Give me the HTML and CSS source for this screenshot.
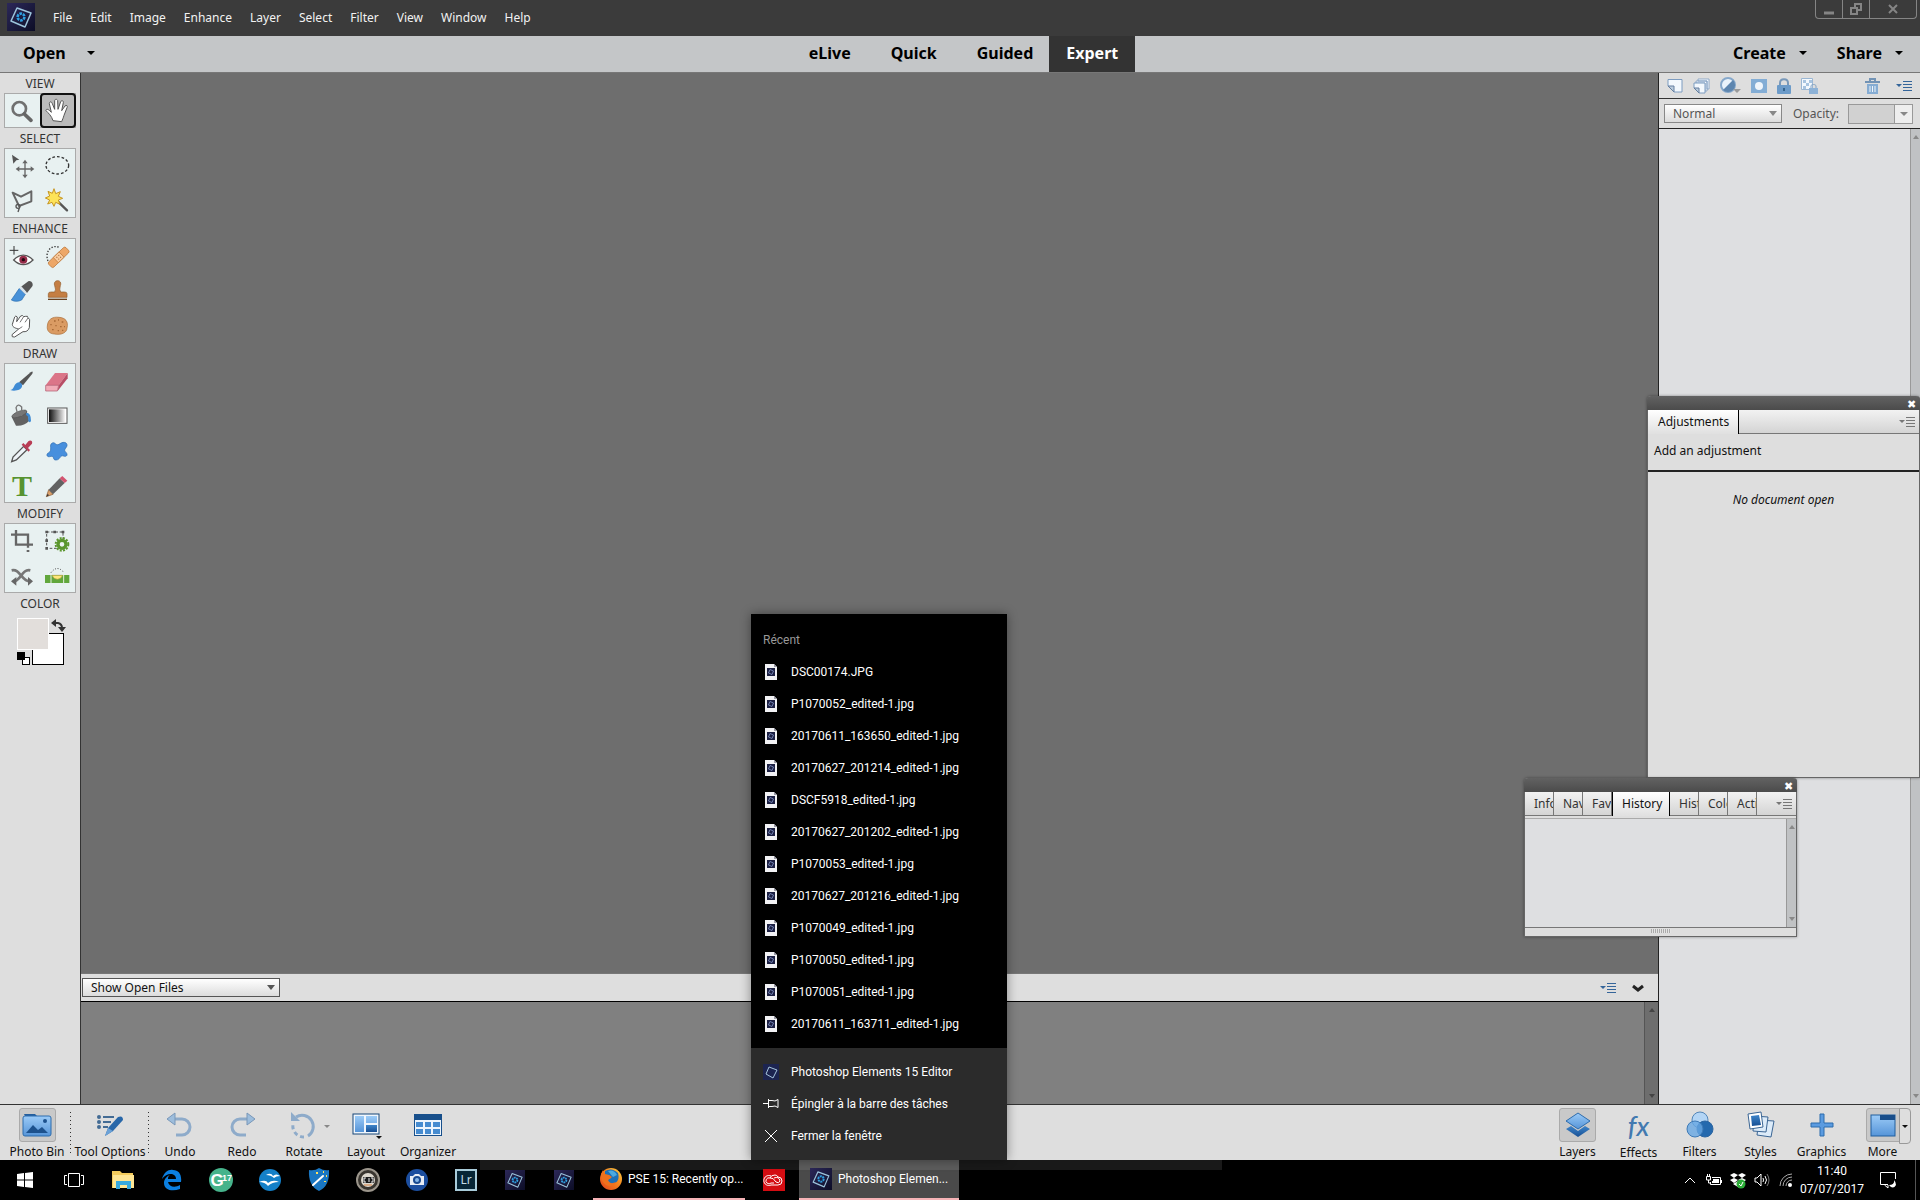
FILE: index.html
```html
<!DOCTYPE html>
<html lang="en">
  <head>
    <meta charset="UTF-8" />
    <meta name="viewport" content="width=device-width, initial-scale=1.0" />
    <title>Photoshop Elements 15 Editor</title>
    <link rel="stylesheet" href="styles.css">
  </head>
  <body>
    <!-- Shared icons -->
    <svg class="sprite" aria-hidden="true">
      <defs>
        <linearGradient id="blue" x1="0" y1="0" x2="0" y2="1"><stop offset="0" stop-color="#9ccbf7" /><stop offset="1" stop-color="#5594d8" /></linearGradient>
        <linearGradient id="deep" x1="0" y1="0" x2="0" y2="1"><stop offset="0" stop-color="#3e85ca" /><stop offset="1" stop-color="#174f94" /></linearGradient>
        <linearGradient id="bw"><stop offset="0" stop-color="#111" /><stop offset="1" stop-color="#fff" /></linearGradient>
        <linearGradient id="fox" x1="0" y1="1" x2="1" y2="0"><stop offset="0" stop-color="#e2401b" /><stop offset="0.6" stop-color="#f58a1f" /><stop offset="1" stop-color="#ffd84a" /></linearGradient>
        <linearGradient id="night" x1="0" y1="0" x2="1" y2="1"><stop offset="0" stop-color="#2c2859" /><stop offset="1" stop-color="#0c0d26" /></linearGradient>
      </defs>
      <symbol id="pse" viewBox="0 0 28 28">
        <rect width="28" height="28" fill="url(#night)" />
        <path d="M10 5 24 10 18 24 4 18Z" fill="none" stroke="#9cc4dc" stroke-width="1.5" stroke-linejoin="round" />
        <circle cx="14" cy="14" r="3.4" fill="none" stroke="#2d9fe0" stroke-width="2.6" stroke-dasharray="2.6 0.9" />
      </symbol>
      <symbol id="doc" viewBox="0 0 12 16">
        <path d="M0 0H9L12 3V16H0Z" fill="#f2f2f5" />
        <path d="M9 0V3H12Z" fill="#9a9aa6" />
        <rect x="2" y="4" width="8" height="8" fill="#1b1f42" />
        <path d="M5 5.500 8.500 7 7 10.500 3.500 9Z" fill="none" stroke="#8394c6" stroke-width="0.8" />
      </symbol>
      <symbol id="menu" viewBox="0 0 16 12">
        <path d="M0 4H6L3 7Z" />
        <path d="M7 1.500H16M7 4.500H16M7 7.500H16M7 10.500H16" stroke="currentColor" stroke-width="1" />
      </symbol>
    </svg>

    <!-- Menu bar -->
    <header class="menubar">
      <svg class="logo" width="28" height="28"><use href="#pse" /></svg>
      <nav class="menus">
        <button>File</button>
        <button>Edit</button>
        <button>Image</button>
        <button>Enhance</button>
        <button>Layer</button>
        <button>Select</button>
        <button>Filter</button>
        <button>View</button>
        <button>Window</button>
        <button>Help</button>
      </nav>
      <div class="window-buttons">
        <button aria-label="Minimize"><svg width="12" height="12" viewBox="0 0 12 12"><path d="M1 10H11" stroke-width="3" /></svg></button>
        <button aria-label="Restore"><svg width="12" height="12" viewBox="0 0 12 12"><path d="M5 4V1H11V7H8M1 5H7V11H1Z" stroke-width="2" /></svg></button>
        <button class="wide" aria-label="Close"><svg width="12" height="12" viewBox="0 0 12 12"><path d="M2 2 10 10M10 2 2 10" stroke-width="2" /></svg></button>
      </div>
    </header>

    <!-- Mode bar -->
    <div class="modebar">
      <button class="mode-open">Open <i class="caret"></i></button>
      <nav class="modes">
        <button>eLive</button>
        <button>Quick</button>
        <button>Guided</button>
        <button class="active">Expert</button>
      </nav>
      <div class="mode-right">
        <button>Create <i class="caret"></i></button>
        <button>Share <i class="caret"></i></button>
      </div>
    </div>

    <main class="main">
      <!-- Tools -->
      <aside class="tools">
        <h2>VIEW</h2>
        <div class="tool-group">
          <button aria-label="Zoom"><svg viewBox="0 0 78 78"><circle cx="31" cy="32" r="20" fill="#e9f3f5" stroke="#707070" stroke-width="8" /><path d="M46 48 66 67" stroke="#666" stroke-width="11" stroke-linecap="round" /></svg></button>
          <button class="selected" aria-label="Hand"><svg viewBox="0 0 78 78"><path d="M24 68C20 54 10 45 3 38 3 31 10 33 19 43L13 17C13 10 20 10 22 17L29 34 29 8C30 2 37 3 38 8L39 34 47 11C50 6 56 8 55 14L50 38 60 24C64 20 69 23 66 29L57 52C55 60 52 65 50 71Z" fill="#fff" stroke="#555" stroke-width="3" stroke-linejoin="round" /></svg></button>
        </div>
        <h2>SELECT</h2>
        <div class="tool-group">
          <button aria-label="Move"><svg viewBox="0 0 78 78"><path d="M9 5 31 20 22 22 13 32Z" fill="#555" /><path d="M48 26V70M26 48H70" stroke="#666" stroke-width="4" /><path d="M48 20 56 31H40ZM48 76 56 65H40ZM20 48 31 40V56ZM76 48 65 40V56Z" fill="#666" /></svg></button>
          <button aria-label="Elliptical marquee"><svg viewBox="0 0 78 78"><ellipse cx="37" cy="37" rx="34" ry="26" fill="none" stroke="#333" stroke-width="4" stroke-dasharray="8 6" /></svg></button>
          <button aria-label="Lasso"><svg viewBox="0 0 78 78"><path d="M11 14 36 26 67 10V40L30 54Z" fill="none" stroke="#666" stroke-width="6" stroke-linejoin="round" /><circle cx="27" cy="55" r="6" fill="none" stroke="#555" stroke-width="4" /><path d="M31 60 27 72" stroke="#555" stroke-width="4" /></svg></button>
          <button aria-label="Quick selection"><svg viewBox="0 0 78 78"><path d="M36 38 66 67" stroke="#555" stroke-width="7" stroke-linecap="round" /><path d="M27 2 32 17 46 11 40 25 53 31 40 36 45 49 32 43 27 55 21 43 8 48 14 36 1 30 14 24 9 10 22 16Z" fill="#fde358" stroke="#c79622" stroke-width="3" /></svg></button>
        </div>
        <h2>ENHANCE</h2>
        <div class="tool-group">
          <button aria-label="Red eye removal"><svg viewBox="0 0 78 78"><path d="M15 9V35M2 22H28" stroke="#333" stroke-width="3" /><path d="M14 51Q43 22 72 51Q43 79 14 51Z" fill="#fff" stroke="#555" stroke-width="4" /><circle cx="43" cy="50" r="12" fill="#942b48" /><circle cx="43" cy="50" r="5" fill="#220a12" /></svg></button>
          <button aria-label="Spot healing"><svg viewBox="0 0 78 78"><path d="M9 54C-2 25 20 2 45 14" fill="none" stroke="#333" stroke-width="4" stroke-dasharray="4 5" /><g transform="rotate(-44 41 43)"><rect x="5" y="32" width="72" height="22" rx="6" fill="#eda768" stroke="#b97436" stroke-width="2" /><rect x="29" y="32" width="24" height="22" fill="#f8cb9f" stroke="#b97436" stroke-width="2" /><path d="M36 39h3M44 39h3M36 47h3M44 47h3" stroke="#98602c" stroke-width="3" /></g></svg></button>
          <button aria-label="Smart brush"><svg viewBox="0 0 78 78"><path d="M35 27 54 45 70 25C74 17 66 6 58 10Z" fill="#555" /><path d="M31 31 49 49 38 66C26 72 14 70 7 66Z" fill="#4791d8" stroke="#286caf" stroke-width="2" /><path d="M31 31 49 49 53 43 37 25Z" fill="#d8e2e9" /></svg></button>
          <button aria-label="Clone stamp"><svg viewBox="0 0 78 78"><path d="M9 64H66" stroke="#68401e" stroke-width="4" /><path d="M10 58V47Q10 42 18 42H29Q34 35 29 23C22 3 54 3 46 23Q42 35 47 42H58Q66 42 66 47V58Z" fill="#c47e43" stroke="#925a28" stroke-width="2" /></svg></button>
          <button aria-label="Smudge"><svg viewBox="0 0 78 78"><path d="M9 65 29 48C22 46 10 44 10 34L17 12Q20 6 25 12L23 26 35 9Q41 5 44 11L50 10Q57 8 57 14L62 20 61 44Q56 58 42 56L17 72Q7 74 9 65Z" fill="#fff" stroke="#555" stroke-width="3" stroke-linejoin="round" /><path d="M44 11 33 28M57 15 48 28M29 48 40 41" fill="none" stroke="#777" stroke-width="3" /></svg></button>
          <button aria-label="Sponge"><svg viewBox="0 0 78 78"><path d="M7 39C8 20 22 10 42 13 61 14 71 26 66 45 66 59 49 67 28 63 13 62 5 53 7 39Z" fill="#da9b63" stroke="#a96c38" stroke-width="2" /><path d="M16 35h4M27 24h5M39 21h3M50 27h5M31 38h4M45 41h5M57 41h3M21 50h5M38 53h4M51 52h4" stroke="#a86a36" stroke-width="4" /></svg></button>
        </div>
        <h2>DRAW</h2>
        <div class="tool-group">
          <button aria-label="Brush"><svg viewBox="0 0 78 78"><path d="M30 43 65 13Q74 7 70 17L42 52Z" fill="#555" /><path d="M4 66C19 64 12 45 30 43 44 45 43 64 24 67Q13 70 4 66Z" fill="#3f8bd4" /></svg></button>
          <button aria-label="Eraser"><svg viewBox="0 0 78 78"><path d="M2 52 30 15H68L41 52Z" fill="#db7588" /><path d="M41 52 68 15V31L38 69Z" fill="#b84e66" /><path d="M2 52H41L37 69H2Z" fill="#f1acb8" stroke="#ad5266" stroke-width="2" /></svg></button>
          <button aria-label="Paint bucket"><svg viewBox="0 0 78 78"><path d="M8 42 53 24 61 53Q45 70 21 68Z" fill="#626262" /><ellipse cx="31" cy="33" rx="24" ry="8" transform="rotate(-22 31 33)" fill="#777" stroke="#555" stroke-width="2" /><path d="M26 34 21 14Q27 0 38 12V39" fill="none" stroke="#777" stroke-width="4" /><path d="M52 29Q66 29 66 53 62 64 57 51 60 39 51 36Z" fill="#3f8bd4" /></svg></button>
          <button aria-label="Gradient"><svg viewBox="0 0 78 78"><rect x="8" y="15" width="58" height="46" fill="#fff" stroke="#555" stroke-width="3" /><rect x="12" y="19" width="50" height="38" fill="url(#bw)" /></svg></button>
          <button aria-label="Color picker"><svg viewBox="0 0 78 78"><path d="M8 71 12 57 44 25 54 35 22 66Z" fill="#eef4f8" stroke="#555" stroke-width="4" /><path d="M38 20 59 41 63 36 57 30 69 17C72 9 64 5 58 10L49 21 43 15Z" fill="#b83d55" /></svg></button>
          <button aria-label="Custom shape"><svg viewBox="0 0 78 78"><path d="M22 15C31 11 31 24 42 19 54 10 64 12 66 20 68 28 54 34 61 41 71 50 65 58 55 54 45 50 46 66 33 66 22 67 29 53 18 55 5 60 2 48 11 44 24 37 10 20 22 15Z" fill="#478fdd" stroke="#2968ae" stroke-width="2" /></svg></button>
          <button class="type-glyph" aria-label="Type">T</button>
          <button aria-label="Pencil"><svg viewBox="0 0 78 78"><path d="M4 71 11 50 24 64Z" fill="#dba16c" stroke="#86542d" stroke-width="2" /><path d="M11 50 44 16 59 30 24 64Z" fill="#626262" /><path d="M44 16 52 9 67 23 59 30Z" fill="#d35470" /><path d="M4 71 8 62 12 67Z" fill="#333" /></svg></button>
        </div>
        <h2>MODIFY</h2>
        <div class="tool-group">
          <button aria-label="Crop"><svg viewBox="0 0 78 78"><path d="M6 20H57V59M21 6V50H72" fill="none" stroke="#666" stroke-width="7" /><path d="M53 66h8v6h-8z" fill="#666" /></svg></button>
          <button aria-label="Recompose"><svg viewBox="0 0 78 78"><path d="M5 12H54V61H5Z" fill="none" stroke="#555" stroke-width="3" stroke-dasharray="8 5" /><path d="M1 8h8v8H1zM25 8h8v8h-8zM50 8h8v8h-8zM1 34h8v8H1zM1 57h8v8H1z" fill="#555" /><circle cx="51" cy="49" r="19" fill="none" stroke="#5b962e" stroke-width="6" stroke-dasharray="6 4" /><circle cx="51" cy="49" r="12" fill="#edf4f3" stroke="#5b962e" stroke-width="10" /></svg></button>
          <button aria-label="Content-aware move"><svg viewBox="0 0 78 78"><path d="M8 22C34 16 38 57 64 55M64 22C38 16 35 57 12 55" fill="none" stroke="#777" stroke-width="8" /><path d="M6 55 22 42V68ZM72 55 57 42V68Z" fill="#666" /></svg></button>
          <button aria-label="Straighten"><svg viewBox="0 0 78 78"><path d="M18 29Q37 4 57 29" fill="none" stroke="#444" stroke-width="3" stroke-dasharray="3 5" /><path d="M0 36H73V60H0Z" fill="#61a73c" /><path d="M18 36V60M56 36V60" stroke="#e5f0df" stroke-width="3" /><path d="M21 37H53Q48 49 37 49T21 37Z" fill="#ffe77b" stroke="#a59b3d" stroke-width="2" /></svg></button>
        </div>
        <h2>COLOR</h2>
        <svg class="swatches" width="50" height="50" viewBox="0 0 50 50">
          <rect x="15.500" y="15.500" width="31" height="31" fill="#fff" stroke="#000" />
          <rect x="0.500" y="0.500" width="31" height="31" fill="#e2dedb" stroke="#fff" />
          <path d="M37 5H41Q45 6 45 10" fill="none" stroke="#333" stroke-width="2" />
          <path d="M34 5 39 1V9ZM45 14 41 9H49Z" fill="#333" />
          <rect x="5.500" y="39.500" width="7" height="7" fill="#fff" stroke="#000" />
          <rect x="0" y="34" width="8" height="8" fill="#000" />
        </svg>
      </aside>

      <!-- Canvas and photo bin -->
      <section class="workspace">
        <div class="canvas"></div>
        <div class="bin-bar">
          <div class="select-box bin-select">
            <select aria-label="Photo bin contents">
              <option>Show Open Files</option>
            </select>
          </div>
          <div class="bin-actions">
            <button aria-label="Photo bin menu"><svg class="menu-blue" width="16" height="12"><use href="#menu" /></svg></button>
            <button aria-label="Collapse photo bin"><svg width="12" height="8" viewBox="0 0 12 8"><path d="M1 2 6 6 11 2" fill="none" stroke="#222" stroke-width="3" /></svg></button>
          </div>
        </div>
        <div class="bin">
          <div class="scroll scroll-dark"><i></i><i></i></div>
        </div>
      </section>

      <!-- Layers panel -->
      <aside class="layers">
        <div class="layer-tools">
          <button aria-label="New layer"><svg width="16" height="16" viewBox="0 0 16 16"><path d="M1 1.500H15V14H7L1 8Z" fill="#f3f8fd" stroke="#7d9cc0" /><path d="M1 8H7V14Z" fill="#bacbdc" stroke="#647fa0" /></svg></button>
          <button aria-label="New group"><svg width="17" height="16" viewBox="0 0 17 16"><path d="M5 1H16V11H14V3H5ZM3 3H14V13H12V5H3Z" fill="#f3f8fd" stroke="#7d9cc0" stroke-width="0.8" /><path d="M1 5H12V15H6L1 10Z" fill="#f3f8fd" stroke="#7d9cc0" /><path d="M1 10H6V15Z" fill="#bacbdc" stroke="#647fa0" /></svg></button>
          <button aria-label="Adjustment layer"><svg width="21" height="17" viewBox="0 0 21 17"><circle cx="8" cy="8" r="7" fill="#eaf3fb" stroke="#86a8cb" stroke-width="2" /><path d="M13 3A7 7 0 0 1 3 13Z" fill="#5e86af" /><path d="M13 12H21L17 16Z" fill="#9a9a9a" /></svg></button>
          <button aria-label="Layer mask"><svg width="16" height="14" viewBox="0 0 16 14"><rect width="16" height="14" fill="#83add5" /><circle cx="8" cy="7" r="4" fill="#eff5fb" /></svg></button>
          <button aria-label="Lock layer"><svg width="14" height="16" viewBox="0 0 14 16"><path d="M3 8V5C3 0 11 0 11 5V8" fill="none" stroke="#7999ba" stroke-width="2" /><rect y="7" width="14" height="9" rx="1" fill="#6c9bc9" /><path d="M7 10V13" stroke="#35658f" stroke-width="2" /></svg></button>
          <button aria-label="Lock transparency"><svg width="17" height="16" viewBox="0 0 17 16"><path d="M.5 .5H11.500V11.500H.5Z" fill="#f3f8fd" stroke="#9ab6d3" /><path d="M2 2h3v3H2zM8 2h3v3H8zM5 5h3v3H5zM2 8h3v3H2z" fill="#a8c4e0" /><path d="M10 10V8C10 6 15 6 15 8V10" fill="none" stroke="#82a2c2" /><rect x="8" y="10" width="9" height="6" fill="#8db2d7" /></svg></button>
          <button class="trash" aria-label="Delete layer"><svg width="15" height="16" viewBox="0 0 15 16"><path d="M0 4H15M5 3V1H10V3" fill="none" stroke="#7293b5" stroke-width="2" /><path d="M2 6H13V16H2Z" fill="#85acd3" /><path d="M5 8V14M7.500 8V14M10 8V14" stroke="#eef5fb" /></svg></button>
          <button aria-label="Layers menu"><svg class="menu-blue" width="16" height="12"><use href="#menu" /></svg></button>
        </div>
        <div class="blend">
          <div class="select-box blend-select">
            <select aria-label="Blend mode">
              <option>Normal</option>
            </select>
          </div>
          <label for="opacity">Opacity:</label>
          <div class="opacity-box">
            <input type="text" id="opacity" disabled />
            <button aria-label="Opacity slider"><i class="caret"></i></button>
          </div>
        </div>
        <div class="layer-list">
          <div class="scroll"><i></i><i></i></div>
        </div>
      </aside>

      <section class="float adjustments">
        <div class="float-title"><button aria-label="Close adjustments">✖</button></div>
        <div class="tabs">
          <button class="active">Adjustments</button>
          <button class="float-menu" aria-label="Adjustments menu"><svg width="16" height="12"><use href="#menu" /></svg></button>
        </div>
        <p class="adjust-head">Add an adjustment</p>
        <p class="adjust-empty">No document open</p>
      </section>

      <section class="float history">
        <div class="float-title"><button aria-label="Close history">✖</button></div>
        <div class="tabs narrow">
          <button>Info</button>
          <button>Nav</button>
          <button>Fav</button>
          <button class="active">History</button>
          <button>Hist</button>
          <button>Colo</button>
          <button>Acti</button>
          <button class="float-menu" aria-label="History menu"><svg width="16" height="12"><use href="#menu" /></svg></button>
        </div>
        <div class="history-list">
          <div class="scroll"><i></i><i></i></div>
        </div>
        <div class="grip"><i></i></div>
      </section>
    </main>

    <!-- Bottom bar -->
    <footer class="bottombar">
      <div class="actions">
        <button class="action selected first"><span class="pic"><svg width="30" height="26" viewBox="0 0 30 26"><path d="M2 2H13L15 4H3Z" fill="#245e9d" /><rect x="1" y="4" width="28" height="20" rx="2" fill="url(#blue)" stroke="#2d6cad" /><path d="M4 21 11 13 16 18 20 15 26 21Z" fill="#1c518d" /><circle cx="23" cy="9" r="2" fill="#1c518d" /></svg></span>Photo Bin</button>
        <button class="action second"><span class="pic"><svg width="28" height="24" viewBox="0 0 28 24"><circle cx="3" cy="4" r="2" fill="#436b94" /><circle cx="3" cy="9" r="2" fill="#436b94" /><circle cx="3" cy="14" r="2" fill="#436b94" /><path d="M7 4H18M7 9H15M7 14H12" stroke="#436b94" stroke-width="2" /><path d="M9 23 12 15 22 4Q27 2 27 7L17 18Z" fill="#2867a9" /><path d="M9 23 12 15 17 18Z" fill="#6ca2d7" /></svg></span>Tool Options</button>
        <button class="action"><span class="pic"><svg width="26" height="26" viewBox="0 0 26 26"><path d="M6 7H15A8 8 0 0 1 15 23H9" fill="none" stroke="#8eabca" stroke-width="3" /><path d="M0 7 8 1V13Z" fill="#9dbddc" stroke="#7897b8" /></svg></span>Undo</button>
        <button class="action"><span class="pic"><svg width="26" height="26" viewBox="0 0 26 26"><path d="M20 7H11A8 8 0 0 0 11 23H17" fill="none" stroke="#8eabca" stroke-width="3" /><path d="M26 7 18 1V13Z" fill="#9dbddc" stroke="#7897b8" /></svg></span>Redo</button>
        <button class="action"><span class="pic"><svg width="28" height="28" viewBox="0 0 28 28"><path d="M6 6A11 11 0 1 1 18 25" fill="none" stroke="#8eabca" stroke-width="3" /><path d="M14 26A11 11 0 0 1 3 13" fill="none" stroke="#8eabca" stroke-width="3" stroke-dasharray="4 3" /><path d="M1 1V10H10Z" fill="#8eabca" /></svg><i class="caret side"></i></span>Rotate</button>
        <button class="action"><span class="pic"><svg width="28" height="28" viewBox="0 0 28 28"><rect x="1" y="3" width="26" height="20" fill="#f0f6fc" stroke="#174678" /><path d="M3 5H12V21H3ZM14 5H25V12H14Z" fill="url(#blue)" /><path d="M14 14H25V21H14Z" fill="url(#deep)" /></svg><i class="caret below"></i></span>Layout</button>
        <button class="action"><span class="pic"><svg width="28" height="22" viewBox="0 0 28 22"><rect width="28" height="22" fill="#174f8b" /><rect x="1" y="6" width="26" height="15" fill="#edf5fd" /><path d="M2 8h7v5H2zM11 8h6v5h-6zM19 8h7v5h-7zM2 15h7v5H2zM11 15h6v5h-6zM19 15h7v5h-7z" fill="#458bd0" /></svg></span>Organizer</button>
      </div>
      <div class="actions">
        <button class="action selected"><span class="pic"><svg width="26" height="26" viewBox="0 0 26 26"><path d="M1 17 6 14 13 19 20 14 25 17 13 25Z" fill="url(#deep)" /><path d="M13 1 25 9 13 17 1 9Z" fill="url(#blue)" stroke="#2d6cad" /></svg></span>Layers</button>
        <button class="action"><span class="pic fx-glyph">fx</span>Effects</button>
        <button class="action"><span class="pic"><svg width="28" height="28" viewBox="0 0 28 28"><circle cx="14" cy="9" r="8" fill="#b3d5f5" stroke="#5285b8" /><circle cx="19" cy="18" r="8" fill="#2469ae" stroke="#2b65a1" /><circle cx="9" cy="18" r="8" fill="#67a6e2" fill-opacity="0.8" stroke="#3e7ab6" /></svg></span>Filters</button>
        <button class="action"><span class="pic"><svg width="28" height="28" viewBox="0 0 28 28"><g fill="#dcebf9" stroke="#3a6594"><path d="M12 9 27 10 24 26 10 24Z" /><path d="M7 5 21 6 19 21 6 20Z" /><path d="M1 3 14 1 16 16 3 18Z" fill="#fff" /></g><path d="M4 5 12 4 14 14 5 15Z" fill="url(#deep)" /></svg></span>Styles</button>
        <button class="action"><span class="pic"><svg width="24" height="24" viewBox="0 0 24 24"><path d="M10 1H14V10H23V14H14V23H10V14H1V10H10Z" fill="#5b9be0" stroke="#2d6cad" /></svg></span>Graphics</button>
        <button class="action selected more"><span class="pic"><svg width="26" height="24" viewBox="0 0 26 24"><rect x="1" y="2" width="24" height="21" fill="url(#blue)" stroke="#215e9e" /><path d="M10 2H25V7H10Z" fill="#194e8a" /></svg></span><span class="more-caret"><i class="caret"></i></span>More</button>
      </div>
    </footer>

    <!-- Windows taskbar -->
    <div class="taskbar">
      <button class="task" aria-label="Start"><svg width="16" height="16" viewBox="0 0 16 16"><path d="M0 2 7 1V7.500H0ZM8 1 16 0V7.500H8ZM0 8.500H7V15L0 14ZM8 8.500H16V16L8 15Z" fill="#fff" /></svg></button>
      <button class="task" aria-label="Task view"><svg width="20" height="16" viewBox="0 0 20 16"><path d="M4.500 1.500H15.500V14.500H4.500ZM3 3.500H.5V12.500H3M17 3.500H19.500V12.500H17" fill="none" stroke="#fff" /></svg></button>
      <button class="task" aria-label="Explorer"><svg width="22" height="20" viewBox="0 0 22 20"><path d="M0 1H8L10 3H21V18H0Z" fill="#f4cc5c" /><path d="M1 5H22V18H1Z" fill="#ffe694" /><path d="M4 19V11H19V19H15V15H8V19Z" fill="#38aadf" /></svg></button>
      <button class="task" aria-label="Edge"><svg width="22" height="22" viewBox="0 0 22 22"><path d="M1 10C3 3 8 0 12 1 18 1 21 6 20 13H7C8 18 14 19 19 16V20C11 23 3 21 3 14 3 10 6 7 9 6 7 7 7 9 7 10H15C15 4 6 3 1 10Z" fill="#0b7fe0" /></svg></button>
      <button class="task" aria-label="G17"><svg width="24" height="24" viewBox="0 0 24 24"><circle cx="12" cy="12" r="12" fill="#46b38b" /><text x="8" y="18" class="g-glyph">G</text><text x="18" y="13" class="g-small">17</text></svg></button>
      <button class="task" aria-label="OpenOffice"><svg width="24" height="24" viewBox="0 0 24 24"><circle cx="12" cy="12" r="11" fill="#1480c8" /><path d="M8 7Q13 4 15 8 18 5 22 8 18 8 16 10 13 7 8 7ZM1 14Q8 11 10 15 15 11 21 14 14 14 10 18 7 14 1 14Z" fill="#fff" /></svg></button>
      <button class="task" aria-label="Photo tools"><svg width="22" height="24" viewBox="0 0 22 24"><path d="M1 2Q7 3 11 0 16 3 21 2 22 18 11 23 0 18 1 2Z" fill="#1976c2" /><path d="M5 17 15 8" stroke="#fff" stroke-width="2" stroke-linecap="round" /><path d="M8 4h2v2H8zM15 3h1v2h-1zM18 7h1v2h-1zM16 13h2v1h-2z" fill="#ffe15d" /></svg></button>
      <button class="task" aria-label="Camera image"><svg width="24" height="24" viewBox="0 0 24 24"><circle cx="12" cy="12" r="11" fill="#39352f" stroke="#9b958b" stroke-width="2" /><circle cx="12" cy="12" r="7" fill="#ddd8ce" /><rect x="7" y="9" width="11" height="6" rx="1" fill="#1c1c1c" /><path d="M10 10H8V14H10M13 10V14M15 10H17V14H15" fill="none" stroke="#eee" /><path d="M8 17H16" stroke="#cf7c41" /></svg></button>
      <button class="task" aria-label="Camera"><svg width="22" height="22" viewBox="0 0 22 22"><circle cx="11" cy="11" r="11" fill="#1c4e9f" /><path d="M4 7H7L9 5H13L15 7H18V16H4Z" fill="#e9eef6" /><circle cx="11" cy="11" r="4" fill="#1a4a91" /><circle cx="11" cy="11" r="2" fill="#87b6e8" /></svg></button>
      <button class="task" aria-label="Lightroom"><svg width="22" height="22" viewBox="0 0 22 22"><rect x="1" y="1" width="20" height="20" fill="#062535" stroke="#a8cbd9" stroke-width="2" /><text x="11" y="15" class="lr-glyph">Lr</text></svg></button>
      <button class="task" aria-label="Elements Organizer"><svg width="20" height="20"><use href="#pse" /></svg></button>
      <button class="task" aria-label="Elements Editor"><svg width="20" height="20"><use href="#pse" /></svg></button>
      <button class="task-open firefox">
        <svg width="22" height="22" viewBox="0 0 22 22"><circle cx="11" cy="11" r="11" fill="url(#fox)" /><path d="M5 3Q12-1 18 5 20 12 15 15 9 17 7 12L11 10 9 7 5 7Z" fill="#1c70b8" /><path d="M8 3Q14 1 17 7L13 9Z" fill="#4ba9df" /><path d="M1 6 3 2 5 6 9 7 12 9 8 12Q10 17 16 14 13 20 6 17 1 14 1 6Z" fill="#ef711d" /></svg>
        <span>PSE 15: Recently op...</span>
      </button>
      <button class="task cloud" aria-label="Creative Cloud"><svg width="22" height="22" viewBox="0 0 22 22"><rect width="22" height="22" fill="#d40c12" /><path d="M8 7A5 5 0 1 0 8 16H15A4 4 0 0 0 15 8Q14 6 12 6 8 6 7 9M13 13Q10 8 7 9A3 3 0 1 0 8 14H11M11 9Q16 7 17 12 16 15 13 13" fill="none" stroke="#fff" /></svg></button>
      <div class="task-current">
        <button class="task-open">
          <svg width="22" height="22"><use href="#pse" /></svg>
          <span>Photoshop Elemen...</span>
        </button>

        <!-- Jump list -->
        <div class="jumplist">
          <div class="recent">
            <h3>Récent</h3>
            <button><svg width="12" height="16"><use href="#doc" /></svg>DSC00174.JPG</button>
            <button><svg width="12" height="16"><use href="#doc" /></svg>P1070052_edited-1.jpg</button>
            <button><svg width="12" height="16"><use href="#doc" /></svg>20170611_163650_edited-1.jpg</button>
            <button><svg width="12" height="16"><use href="#doc" /></svg>20170627_201214_edited-1.jpg</button>
            <button><svg width="12" height="16"><use href="#doc" /></svg>DSCF5918_edited-1.jpg</button>
            <button><svg width="12" height="16"><use href="#doc" /></svg>20170627_201202_edited-1.jpg</button>
            <button><svg width="12" height="16"><use href="#doc" /></svg>P1070053_edited-1.jpg</button>
            <button><svg width="12" height="16"><use href="#doc" /></svg>20170627_201216_edited-1.jpg</button>
            <button><svg width="12" height="16"><use href="#doc" /></svg>P1070049_edited-1.jpg</button>
            <button><svg width="12" height="16"><use href="#doc" /></svg>P1070050_edited-1.jpg</button>
            <button><svg width="12" height="16"><use href="#doc" /></svg>P1070051_edited-1.jpg</button>
            <button><svg width="12" height="16"><use href="#doc" /></svg>20170611_163711_edited-1.jpg</button>
          </div>
          <div class="commands">
            <button><svg width="16" height="16" viewBox="0 0 16 16"><rect width="16" height="16" fill="#1c2450" /><path d="M6 3 14 6 10 14 3 10Z" fill="none" stroke="#a5c4dc" /></svg>Photoshop Elements 15 Editor</button>
            <button><svg width="16" height="12" viewBox="0 0 16 12"><path d="M0 5.500H6M5.500 1V10M6 2.500H9Q12 4 15 1.500V9.500Q12 7 9 8.500H6" fill="none" stroke="#fff" /></svg>Épingler à la barre des tâches</button>
            <button><svg width="16" height="16" viewBox="0 0 16 16"><path d="M2 2 14 14M14 2 2 14" stroke="#fff" /></svg>Fermer la fenêtre</button>
          </div>
        </div>
      </div>

      <div class="tray">
        <button aria-label="Hidden icons"><svg width="12" height="8" viewBox="0 0 12 8"><path d="M1 7 6 2 11 7" fill="none" stroke="#fff" /></svg></button>
        <button aria-label="Battery"><svg width="16" height="14" viewBox="0 0 16 14"><path d="M6 4.500H14.500V11.500H4.500V9M15.500 7V10" fill="none" stroke="#fff" /><path d="M7 6H13V10H6V8H7Z" fill="#fff" /><path d="M.5 3.500H4.500V7H.5ZM1.500 1V3M3.500 1V3M2.500 7V10H5" fill="none" stroke="#fff" /></svg></button>
        <button aria-label="Dropbox"><svg width="16" height="17" viewBox="0 0 16 17"><path d="M4 1 8 3 4 6 0 3ZM12 1 16 3 12 6 8 3ZM4 6 8 8 4 11 0 8ZM12 6 16 8 12 11 8 8ZM3 12 8 9 12 12 8 15Z" fill="#fff" /><circle cx="11" cy="12" r="4.500" fill="#2cae38" /><path d="M9 12 11 14 13 10" fill="none" stroke="#fff" /></svg></button>
        <button aria-label="Volume"><svg width="16" height="14" viewBox="0 0 16 14"><path d="M1 5H3L7 1V13L3 9H1Z" fill="none" stroke="#fff" /><path d="M9 5Q10 7 9 9M11 3Q14 7 11 11" fill="none" stroke="#fff" /><path d="M13 1Q17 7 13 13" fill="none" stroke="#777" /></svg></button>
        <button aria-label="Wi-Fi"><svg width="14" height="14" viewBox="0 0 14 14"><path d="M1 13A12 12 0 0 1 13 1M4 13A9 9 0 0 1 13 4M7 13A6 6 0 0 1 13 7" fill="none" stroke="#aaa" /><circle cx="11" cy="12" r="2" fill="#fff" /></svg></button>
        <div class="clock"><time>11:40</time><time>07/07/2017</time></div>
        <button class="notify" aria-label="Notifications"><svg width="18" height="18" viewBox="0 0 18 18"><path d="M9 13.500H1.500V1.500H16.500V8" fill="none" stroke="#fff" /><path d="M5.500 14 9 17V14" fill="none" stroke="#fff" /><path d="M15 9Q16 14 10 14 14 19 17 14 17 11 15 9Z" fill="#fff" /></svg></button>
      </div>
    </div>
  </body>
</html>
```
FILE: styles.css
```css
* {
  box-sizing: border-box;
}

body {
  margin: 0;
  height: 100vh;
  display: flex;
  flex-direction: column;
  font-family: "Noto Sans", "Open Sans", sans-serif;
  font-size: 12px;
  line-height: 16px;
  color: #111;
  background-color: #dedede;
  overflow: hidden;
}

button {
  font: inherit;
  color: inherit;
  background: none;
  border: none;
  padding: 0;
  cursor: pointer;
}

h2,
h3,
p {
  margin: 0;
  font-size: 12px;
  font-weight: normal;
}

svg {
  display: block;
  flex: none;
}

.sprite {
  position: absolute;
  width: 0;
  height: 0;
}

.caret {
  display: inline-block;
  border: 4px solid transparent;
  border-top-color: currentColor;
  border-bottom: none;
}

/* Menu bar */
.menubar {
  flex: none;
  height: 36px;
  display: flex;
  background-color: #3b3b3b;
  color: #f2f2f2;
}

.logo {
  margin: 3px 18px 0 7px;
}

.menus {
  display: flex;
  flex: 1;
  gap: 18px;
}

.window-buttons {
  display: flex;
  height: 19px;
  margin-right: 3px;
  border: 1px solid #858585;
  border-top: none;
  border-radius: 0 0 4px 4px;
}

.window-buttons button {
  display: flex;
  align-items: center;
  justify-content: center;
  width: 27px;
  border-right: 1px solid #858585;
}

.window-buttons .wide {
  width: 46px;
  border-right: none;
}

.window-buttons svg {
  fill: none;
  stroke: #858585;
}

/* Mode bar */
.modebar {
  flex: none;
  height: 37px;
  display: grid;
  grid-template-columns: 1fr auto 1fr;
  background-color: #c4c6c8;
  border-bottom: 1px solid #777;
  font-size: 16px;
  font-weight: bold;
  color: #000;
}

.modebar button {
  padding-bottom: 2px;
}

.mode-open {
  justify-self: start;
  display: flex;
  align-items: center;
  gap: 21px;
  margin-left: 23px;
}

.modes {
  display: flex;
}

.modes button {
  padding-left: 24px;
  padding-right: 16px;
}

.modes .active {
  padding-left: 17px;
  padding-right: 17px;
  background-color: #333;
  color: #fff;
}

.mode-right {
  justify-self: end;
  display: flex;
  gap: 30px;
  padding-right: 17px;
}

.mode-right button {
  display: flex;
  align-items: center;
  gap: 13px;
}

/* Tools */
.main {
  flex: 1;
  min-height: 0;
  display: flex;
  position: relative;
}

.tools {
  flex: none;
  width: 81px;
  border-right: 1px solid #333;
  background-color: #dedede;
}

.tools h2 {
  height: 20px;
  line-height: 22px;
  text-align: center;
  color: #333;
}

.tool-group {
  display: grid;
  grid-template-columns: 1fr 1fr;
  grid-auto-rows: 35px;
  margin: 0 4px;
  outline: 1px solid #aaa;
  outline-offset: -1px;
  background-color: #e8f1f1;
}

.tool-group button {
  display: flex;
  align-items: center;
  justify-content: center;
}

.tool-group svg {
  width: 26px;
  height: 26px;
}

.tool-group .selected {
  border: 2px solid #111;
  border-radius: 4px;
  background-color: #bbb;
  z-index: 1;
}

.swatches {
  margin: 5px 0 0 17px;
}

.tool-group .type-glyph {
  font: bold 30px "Liberation Serif", serif;
  color: #579331;
}

/* Workspace */
.workspace {
  flex: 1;
  min-width: 0;
  display: flex;
  flex-direction: column;
}

.canvas {
  flex: 1;
  background-color: #6e6e6e;
}

.bin-bar {
  flex: none;
  height: 29px;
  display: flex;
  align-items: center;
  justify-content: space-between;
  border-top: 1px solid #777;
  border-bottom: 1px solid #000;
  background-color: #dedede;
}

.bin-actions {
  display: flex;
  align-items: center;
  gap: 16px;
  padding-right: 14px;
}

.menu-blue {
  color: #34659a;
  fill: #34659a;
}

.select-box {
  position: relative;
}

.select-box::after {
  content: "";
  position: absolute;
  right: 5px;
  top: 7px;
  border: 4px solid transparent;
  border-top: 5px solid #555;
  border-bottom: none;
  pointer-events: none;
}

.select-box select {
  display: block;
  width: 100%;
  height: 19px;
  padding: 1px 8px 0;
  appearance: none;
  border: 1px solid #555;
  border-radius: 0;
  background: linear-gradient(#fff, #dcdcdc);
  font: inherit;
  line-height: 16px;
  color: #111;
}

.bin-select {
  width: 198px;
  margin-left: 1px;
}

.bin {
  flex: none;
  height: 102px;
  display: flex;
  justify-content: flex-end;
  background-color: #808080;
}

.scroll {
  width: 10px;
  display: flex;
  flex-direction: column;
  justify-content: space-between;
  align-items: center;
  padding: 6px 0;
  border-left: 1px solid #999;
  background-color: #c0c2c4;
}

.scroll i {
  border: 3px solid transparent;
  border-bottom: 4px solid #888;
  border-top: none;
}

.scroll i:last-child {
  border: 3px solid transparent;
  border-top: 4px solid #888;
  border-bottom: none;
}

.scroll-dark {
  width: 14px;
  border-left-color: #555;
  background-color: #6e6e6e;
}

.scroll-dark i {
  border-bottom-color: #444;
}

.scroll-dark i:last-child {
  border-top-color: #444;
}

/* Layers panel */
.layers {
  flex: none;
  width: 262px;
  display: flex;
  flex-direction: column;
  border-left: 1px solid #222;
  background-color: #dedfe1;
}

.layer-tools {
  height: 26px;
  display: flex;
  align-items: center;
  gap: 10px;
  padding: 0 8px;
  border-bottom: 1px solid #333;
  background-color: #dedede;
}

.layer-tools .trash {
  margin-left: auto;
  margin-right: 6px;
}

.blend {
  height: 30px;
  display: flex;
  align-items: center;
  padding: 0 7px 0 5px;
  border-bottom: 1px solid #222;
  background-color: #dedede;
  color: #555;
}

.blend-select {
  width: 118px;
  margin-right: 11px;
}

.blend-select::after {
  border-top-color: #888;
}

.blend-select select {
  border-color: #888;
  color: #555;
}

.opacity-box {
  display: flex;
  width: 65px;
  height: 20px;
  margin-left: auto;
  border: 1px solid #999;
}

.opacity-box input {
  width: 46px;
  padding: 0;
  border: none;
  border-right: 1px solid #999;
  background-color: #d1d1d1;
}

.opacity-box button {
  flex: 1;
  display: flex;
  align-items: center;
  justify-content: center;
  background-color: #eee;
  color: #888;
}

.layer-list {
  flex: 1;
  display: flex;
  justify-content: flex-end;
}

/* Floating panels */
.float {
  position: absolute;
  width: 273px;
  display: flex;
  flex-direction: column;
  border: 1px solid #666;
  border-top: none;
  border-radius: 4px 4px 0 0;
  background-color: #dedede;
  box-shadow: 0 0 3px rgba(0, 0, 0, 0.4);
}

.adjustments {
  top: 323px;
  right: 0;
  height: 382px;
}

.history {
  top: 705px;
  right: 123px;
  height: 159px;
}

.float-title {
  height: 14px;
  margin: 0 -1px;
  padding-right: 4px;
  border-radius: 4px 4px 0 0;
  background: linear-gradient(#626262, #4b4b4b);
  color: #fff;
  font-size: 11px;
  line-height: 15px;
}

.float-title button {
  display: block;
  margin-left: auto;
}

.tabs {
  height: 24px;
  display: flex;
  border-bottom: 1px solid #777;
  background: linear-gradient(#f2f2f2, #d4d4d4);
}

.tabs button {
  padding: 0 9px 0 10px;
  border-right: 1px solid #777;
  color: #333;
  white-space: nowrap;
}

.tabs .active {
  height: 24px;
  border-right: 1px solid #000;
  background: linear-gradient(#fff, #e0e0e0);
  color: #111;
}

.narrow button {
  width: 29px;
  padding: 0 0 0 9px;
  overflow: hidden;
  text-align: left;
}

.narrow .active {
  width: 58px;
  border-left: 1px solid #000;
}

.tabs .float-menu {
  width: auto;
  margin-left: auto;
  padding: 0 4px;
  border: none;
  color: #777;
  fill: #777;
}

.adjust-head {
  padding: 9px 6px 11px;
  border-bottom: 2px solid #222;
}

.adjust-empty {
  padding-top: 20px;
  font-style: italic;
  text-align: center;
}

.history-list {
  flex: 1;
  display: flex;
  justify-content: flex-end;
  margin-top: 2px;
  border-top: 1px solid #aaa;
  border-bottom: 1px solid #777;
  background-color: #dedfe1;
}

.grip {
  height: 8px;
  padding-top: 1px;
}

.grip i {
  display: block;
  width: 20px;
  height: 4px;
  margin: 0 auto;
  background: repeating-linear-gradient(90deg, #aaa 0 1px, #e4e4e4 1px 2px);
}

/* Bottom bar */
.bottombar {
  flex: none;
  height: 56px;
  display: flex;
  justify-content: space-between;
  padding: 0 7px 0 3px;
  border-top: 1px solid #333;
  background-color: #dedede;
  color: #111;
}

.actions {
  display: flex;
}

.action {
  position: relative;
  width: 62px;
  display: flex;
  flex-direction: column;
  align-items: center;
  padding-top: 3px;
  white-space: nowrap;
}

.actions + .actions .action {
  width: 61px;
}

.action.first {
  width: 68px;
}

.action.second {
  width: 78px;
}

/* dotted separators */
.first::after,
.second::after {
  content: "";
  position: absolute;
  top: 7px;
  right: 0;
  width: 1px;
  height: 42px;
  background: repeating-linear-gradient(#333 0 1px, transparent 1px 4px);
}

.pic {
  position: relative;
  width: 37px;
  height: 36px;
  display: flex;
  align-items: center;
  justify-content: center;
  margin-bottom: 2px;
  border: 1px solid transparent;
  border-radius: 3px;
}

.selected .pic {
  border-color: #aaa;
  background-color: #c9c9c9;
}

.side {
  position: absolute;
  right: -8px;
  top: 16px;
  border-width: 3px;
  border-bottom: none;
  color: #888;
}

.below {
  position: absolute;
  right: 2px;
  bottom: 2px;
  border-width: 3px;
  border-bottom: none;
}

.more .pic {
  width: 34px;
  border-radius: 3px 0 0 3px;
}

.more-caret {
  position: absolute;
  left: 47px;
  top: 3px;
  width: 12px;
  height: 36px;
  display: flex;
  align-items: center;
  justify-content: center;
  border: 1px solid #999;
  border-radius: 0 4px 4px 0;
}

.more-caret .caret {
  border-width: 3px;
  border-bottom: none;
}

.fx-glyph {
  font: italic 500 27px Lato, sans-serif;
  color: #4279b0;
}

/* Taskbar */
.taskbar {
  flex: none;
  height: 40px;
  display: flex;
  background: linear-gradient(#191919, #191919) 480px 0 / 742px 10px no-repeat #000;
  font-family: Roboto, "Open Sans", sans-serif;
  color: #fff;
}

.task {
  width: 49px;
  display: flex;
  align-items: center;
  justify-content: center;
}

.task-open {
  width: 152px;
  height: 40px;
  display: flex;
  align-items: center;
  gap: 6px;
  padding-left: 7px;
  border-bottom: 2px solid #f5b3b6;
  white-space: nowrap;
}

.firefox {
  margin-left: 5px;
}

.task.cloud {
  width: 54px;
  padding-left: 4px;
}

.task-current {
  position: relative;
}

.task-current .task-open {
  width: 160px;
  padding-left: 11px;
  background: linear-gradient(#5c5c5c 0 10px, #4a4a4a 10px);
}

.g-glyph {
  font: bold 17px "Liberation Sans", sans-serif;
  fill: #fff;
  text-anchor: middle;
}

.g-small {
  font: bold 9px "Liberation Sans", sans-serif;
  fill: #fff;
  text-anchor: middle;
}

.lr-glyph {
  font: 12px "Noto Sans", sans-serif;
  fill: #c3dce6;
  text-anchor: middle;
}

/* Jump list */
.jumplist {
  position: absolute;
  left: 50%;
  bottom: 100%;
  width: 256px;
  margin-left: -128px;
  background-color: #000;
  box-shadow: 0 0 10px rgba(0, 0, 0, 0.4);
}

.jumplist h3 {
  padding: 0 12px;
  line-height: 32px;
  color: #999;
}

.jumplist button {
  width: 100%;
  height: 32px;
  display: flex;
  align-items: center;
  gap: 14px;
  padding: 0 14px;
  white-space: nowrap;
}

.recent {
  padding: 10px 0 8px;
}

.commands {
  padding: 8px 0;
  background-color: #2b2b2b;
}

.commands button {
  gap: 12px;
  padding: 0 12px;
}

/* Tray */
.tray {
  display: flex;
  align-items: center;
  margin-left: auto;
  margin-right: 4px;
  padding-right: 18px;
  border-right: 1px solid #555;
}

.tray button {
  width: 24px;
  display: flex;
  justify-content: center;
}

.clock {
  display: flex;
  flex-direction: column;
  gap: 2px;
  width: 68px;
  text-align: center;
}

.tray .notify {
  width: 31px;
  justify-content: flex-end;
}
```
